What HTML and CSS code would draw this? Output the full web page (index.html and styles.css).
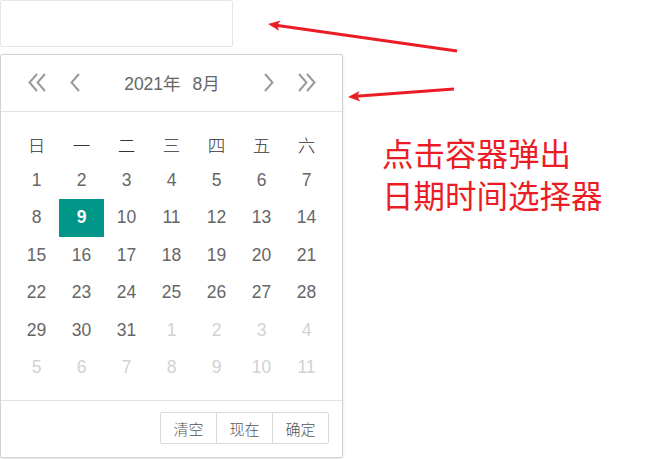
FILE: index.html
```html
<!DOCTYPE html>
<html lang="zh-CN">
<head>
<meta charset="utf-8">
<title>laydate</title>
<link rel="stylesheet" href="styles.css">
</head>
<body>
<div class="page">
  <div class="input-box"></div>
  <div class="laydate">
    <div class="ld-header">
      <svg class="ico dbl" viewBox="0 0 20 19" width="20" height="19"><polyline points="9,1 1.5,9.5 9,18"/><polyline points="17,1 9.5,9.5 17,18"/></svg>
      <svg class="ico sgl" viewBox="0 0 10 19" width="10" height="19"><polyline points="9,1 1.5,9.5 9,18"/></svg>
      <div class="ym"><span>2021年</span><span>8月</span></div>
      <svg class="ico sgl" viewBox="0 0 10 19" width="10" height="19"><polyline points="1,1 8.5,9.5 1,18"/></svg>
      <svg class="ico dbl" viewBox="0 0 20 19" width="20" height="19"><polyline points="3,1 10.5,9.5 3,18"/><polyline points="11,1 18.5,9.5 11,18"/></svg>
    </div>
    <div class="ld-content">
      <div class="grid">
        <div class="wk">日</div><div class="wk">一</div><div class="wk">二</div><div class="wk">三</div><div class="wk">四</div><div class="wk">五</div><div class="wk">六</div>
        <div class="d">1</div><div class="d">2</div><div class="d">3</div><div class="d">4</div><div class="d">5</div><div class="d">6</div><div class="d">7</div>
        <div class="d">8</div><div class="d sel">9</div><div class="d">10</div><div class="d">11</div><div class="d">12</div><div class="d">13</div><div class="d">14</div>
        <div class="d">15</div><div class="d">16</div><div class="d">17</div><div class="d">18</div><div class="d">19</div><div class="d">20</div><div class="d">21</div>
        <div class="d">22</div><div class="d">23</div><div class="d">24</div><div class="d">25</div><div class="d">26</div><div class="d">27</div><div class="d">28</div>
        <div class="d">29</div><div class="d">30</div><div class="d">31</div><div class="d off">1</div><div class="d off">2</div><div class="d off">3</div><div class="d off">4</div>
        <div class="d off">5</div><div class="d off">6</div><div class="d off">7</div><div class="d off">8</div><div class="d off">9</div><div class="d off">10</div><div class="d off">11</div>
      </div>
    </div>
    <div class="ld-footer">
      <div class="btns"><span class="btn">清空</span><span class="btn">现在</span><span class="btn">确定</span></div>
    </div>
  </div>
  <div class="note">点击容器弹出<br>日期时间选择器</div>
  <svg class="arrows" width="670" height="459" viewBox="0 0 670 459">
    <line x1="457" y1="51" x2="276" y2="25.2"/>
    <polygon points="268,24 280.6,20.4 277,25.3 279.2,30.8"/>
    <line x1="454" y1="89" x2="356" y2="96.3"/>
    <polygon points="348,97 359.6,91 357,96.3 360.4,101.5"/>
  </svg>
</div>
</body>
</html>
```
FILE: styles.css
```css
* { box-sizing: border-box; }
html, body { margin: 0; padding: 0; background: #fff; }
body {
  font-family: "Liberation Sans", "Noto Sans CJK SC", Arial, sans-serif;
  color: #666;
}
.page {
  position: relative;
  width: 670px;
  height: 459px;
  overflow: hidden;
}
.input-box {
  width: 233px;
  height: 47px;
  border: 1px solid #e6e6e6;
  border-radius: 2px;
  margin-bottom: 7px;
}
.laydate {
  width: 343px;
  border: 1px solid #d2d2d2;
  border-radius: 2px;
  box-shadow: 0 1px 3px rgba(0,0,0,.12);
  background: #fff;
}
.ld-header {
  height: 57px;
  border-bottom: 1px solid #e2e2e2;
  display: flex;
  align-items: center;
  padding: 0 26px 2px 27px;
}
.ico { fill: none; stroke: #999; stroke-width: 2; flex: none; }
.dbl + .sgl { margin-left: 22px; }
.sgl + .dbl { margin-left: 22px; }
.ym {
  flex: 1;
  display: flex;
  justify-content: center;
  gap: 12px;
  font-size: 17.5px;
  color: #666;
  padding-top: 1px;
}
.ld-content { padding: 12px 13px 13px; }
.grid {
  display: grid;
  grid-template-columns: repeat(7, 45px);
  grid-auto-rows: 37.5px;
}
.grid > div {
  display: flex;
  align-items: center;
  justify-content: center;
  font-size: 17.5px;
}
.wk { color: #333; padding-top: 3px; font-family: "Noto Sans CJK SC", sans-serif; font-weight: 300; font-size: 18px; }
.d { color: #666; }
.d.off { color: #d2d2d2; }
.d.sel { background: #009688; color: #fff; font-weight: bold; }
.ld-footer {
  height: 57px;
  border-top: 1px solid #e2e2e2;
  display: flex;
  align-items: center;
  justify-content: flex-end;
  padding: 0 13px 1px;
}
.btns { display: flex; }
.btn {
  height: 32px;
  width: 57px;
  border: 1px solid #d9d9d9;
  margin-left: -1px;
  display: flex;
  align-items: center;
  justify-content: center;
  font-size: 15px;
  color: #555;
  font-family: "Noto Sans CJK SC", sans-serif;
  font-weight: 300;
}
.btn:first-child { border-radius: 2px 0 0 2px; }
.btn:last-child { border-radius: 0 2px 2px 0; }
.note {
  position: absolute;
  left: 382px;
  top: 131px;
  font-family: "Noto Sans CJK SC", sans-serif;
  font-size: 31.5px;
  line-height: 42px;
  color: #ec1c24;
}
.arrows { position: absolute; left: 0; top: 0; pointer-events: none; }
.arrows line { stroke: #ec1c24; stroke-width: 3; }
.arrows polygon { fill: #ec1c24; }
```
